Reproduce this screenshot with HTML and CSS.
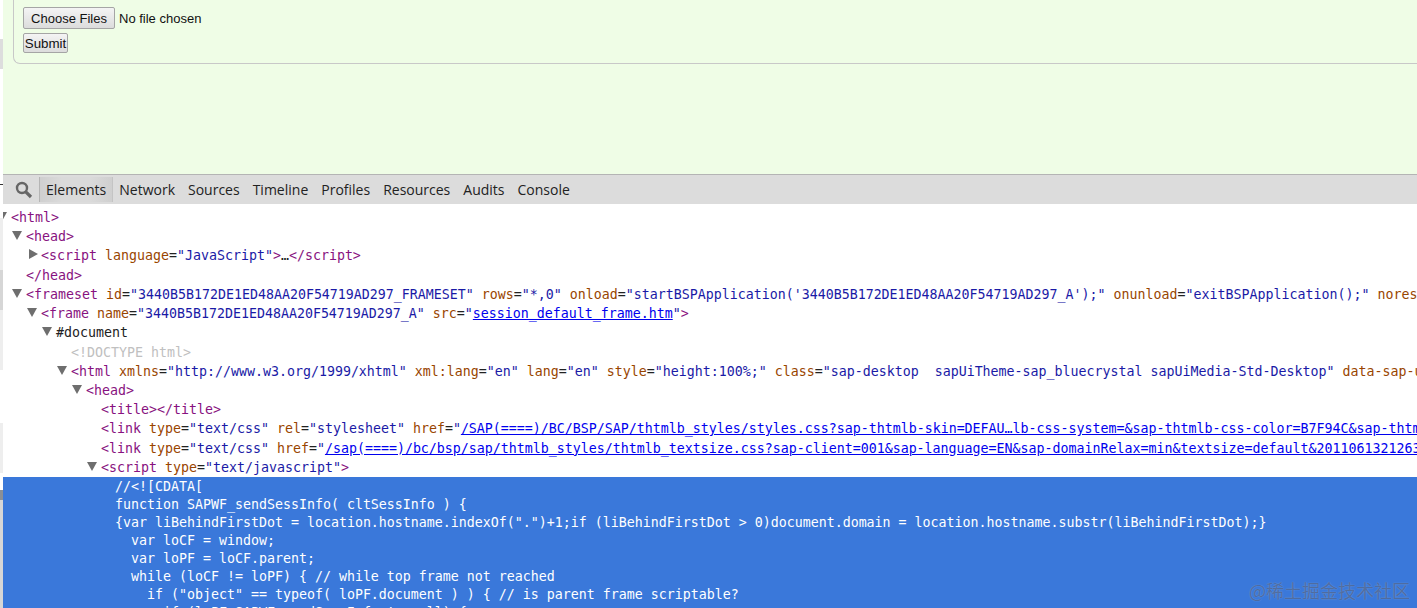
FILE: index.html
```html
<!DOCTYPE html>
<html lang="en">
<head>
    <meta charset="UTF-8">
    <title>Upload</title>
    <link rel="stylesheet" href="styles.css">
</head>
<body>
<div class="strip">
    <div class="s-white s39"></div>
    <div class="s-grey s30"></div>
    <div class="s-white s115"></div>
    <div class="s-line"></div>
    <div class="s-white s33"></div>
    <div class="s-pale s52"></div>
    <div class="s-mid s40"></div>
    <div class="s-pale s60"></div>
    <div class="s-white s53"></div>
    <div class="s-pale s50"></div>
    <div class="s-white s17"></div>
    <div class="s-dark s10"></div>
    <div class="s-mid s108"></div>
</div>
<div class="main">
    <div class="page">
        <div class="box">
            <div class="file-row">
                <button class="file-btn">Choose Files</button>
                <span>No file chosen</span>
            </div>
            <button class="submit-btn">Submit</button>
        </div>
    </div>
    <div class="toolbar">
        <div class="search">
            <svg width="18" height="18" viewBox="0 0 18 18">
                <circle cx="7" cy="7" r="5" fill="none" stroke="#666" stroke-width="2.4"/>
                <path d="M10.8 10.8L16 16" stroke="#666" stroke-width="3.2"/>
            </svg>
        </div>
        <div class="tab active">Elements</div>
        <div class="tab">Network</div>
        <div class="tab">Sources</div>
        <div class="tab">Timeline</div>
        <div class="tab">Profiles</div>
        <div class="tab">Resources</div>
        <div class="tab">Audits</div>
        <div class="tab">Console</div>
    </div>
    <div class="tree">
<div class="row l0"><i class="tw open"></i><span class="t">&lt;html&gt;</span></div>
<div class="row l1"><i class="tw open"></i><span class="t">&lt;head&gt;</span></div>
<div class="row l2"><i class="tw closed"></i><span class="t">&lt;script</span> <span class="a">language</span>=<span class="v">"JavaScript"</span><span class="t">&gt;</span>…<span class="t">&lt;/script&gt;</span></div>
<div class="row l1"><i class="tw"></i><span class="t">&lt;/head&gt;</span></div>
<div class="row l1"><i class="tw open"></i><span class="t">&lt;frameset</span> <span class="a">id</span>=<span class="v">"3440B5B172DE1ED48AA20F54719AD297_FRAMESET"</span> <span class="a">rows</span>=<span class="v">"*,0"</span> <span class="a">onload</span>=<span class="v">"startBSPApplication('3440B5B172DE1ED48AA20F54719AD297_A');"</span> <span class="a">onunload</span>=<span class="v">"exitBSPApplication();"</span> <span class="a">noresize</span>=<span class="v">"noresize"</span><span class="t">&gt;</span></div>
<div class="row l2"><i class="tw open"></i><span class="t">&lt;frame</span> <span class="a">name</span>=<span class="v">"3440B5B172DE1ED48AA20F54719AD297_A"</span> <span class="a">src</span>=<span class="v">"<a class="lnk">session_default_frame.htm</a>"</span><span class="t">&gt;</span></div>
<div class="row l3"><i class="tw open"></i><span class="d">#document</span></div>
<div class="row l4"><i class="tw"></i><span class="dt">&lt;!DOCTYPE html&gt;</span></div>
<div class="row l4"><i class="tw open"></i><span class="t">&lt;html</span> <span class="a">xmlns</span>=<span class="v">"http://www.w3.org/1999/xhtml"</span> <span class="a">xml:lang</span>=<span class="v">"en"</span> <span class="a">lang</span>=<span class="v">"en"</span> <span class="a">style</span>=<span class="v">"height:100%;"</span> <span class="a">class</span>=<span class="v">"sap-desktop  sapUiTheme-sap_bluecrystal sapUiMedia-Std-Desktop"</span> <span class="a">data-sap-ui-theme</span>=<span class="v">"sap"</span><span class="t">&gt;</span></div>
<div class="row l5"><i class="tw open"></i><span class="t">&lt;head&gt;</span></div>
<div class="row l6"><i class="tw"></i><span class="t">&lt;title&gt;&lt;/title&gt;</span></div>
<div class="row l6"><i class="tw"></i><span class="t">&lt;link</span> <span class="a">type</span>=<span class="v">"text/css"</span> <span class="a">rel</span>=<span class="v">"stylesheet"</span> <span class="a">href</span>=<span class="v">"<a class="lnk">/SAP(====)/BC/BSP/SAP/thtmlb_styles/styles.css?sap-thtmlb-skin=DEFAU…lb-css-system=&amp;sap-thtmlb-css-color=B7F94C&amp;sap-thtmlb-css-size=1</a>"</span></div>
<div class="row l6"><i class="tw"></i><span class="t">&lt;link</span> <span class="a">type</span>=<span class="v">"text/css"</span> <span class="a">href</span>=<span class="v">"<a class="lnk">/sap(====)/bc/bsp/sap/thtmlb_styles/thtmlb_textsize.css?sap-client=001&amp;sap-language=EN&amp;sap-domainRelax=min&amp;textsize=default&amp;20110613212631</a>"</span></div>
<div class="row l6"><i class="tw open"></i><span class="t">&lt;script</span> <span class="a">type</span>=<span class="v">"text/javascript"</span><span class="t">&gt;</span></div>
<div class="selected">
<div class="sel-row">//&lt;![CDATA[</div>
<div class="sel-row">function SAPWF_sendSessInfo( cltSessInfo ) {</div>
<div class="sel-row">{var liBehindFirstDot = location.hostname.indexOf(".")+1;if (liBehindFirstDot &gt; 0)document.domain = location.hostname.substr(liBehindFirstDot);}</div>
<div class="sel-row">  var loCF = window;</div>
<div class="sel-row">  var loPF = loCF.parent;</div>
<div class="sel-row">  while (loCF != loPF) { // while top frame not reached</div>
<div class="sel-row">    if ("object" == typeof( loPF.document ) ) { // is parent frame scriptable?</div>
<div class="sel-row">      if (loPF.SAPWF_sendSessInfo != null) {</div>
</div>
    </div>
</div>
<div class="mark">@稀土掘金技术社区</div>
</body>
</html>
```
FILE: styles.css
```css
html, body {
    height: 100%;
}
body {
    display: flex;
    margin: 0;
    overflow: hidden;
    background-color: white;
    font-family: "Liberation Sans", Arial, sans-serif;
}

.strip {
    width: 3px;
    flex: none;
}
.s-white { background-color: #fff; }
.s-grey { background-color: #ddd; }
.s-pale { background-color: #eee; }
.s-mid { background-color: #d6d6d6; }
.s-dark { background-color: #8a8f96; }
.s-line { height: 1px; background-color: #333; }
.s10 { height: 10px; }
.s17 { height: 17px; }
.s30 { height: 30px; }
.s33 { height: 33px; }
.s39 { height: 39px; }
.s40 { height: 40px; }
.s50 { height: 50px; }
.s52 { height: 52px; }
.s53 { height: 53px; }
.s60 { height: 60px; }
.s108 { height: 108px; }
.s115 { height: 115px; }

.main {
    flex: 1;
    min-width: 0;
}

.page {
    height: 174px;
    padding-left: 10px;
    overflow: hidden;
    background-color: #effde6;
    box-sizing: border-box;
}
.box {
    display: flex;
    flex-direction: column;
    align-items: flex-start;
    gap: 4px;
    height: 74px;
    margin-top: -10px;
    padding: 16px 0 0 9px;
    border: 1px solid #c8c8c8;
    border-right: 0;
    border-radius: 0 0 0 7px;
    box-sizing: border-box;
    font-size: 13px;
    color: #111;
}
.file-row {
    display: flex;
    align-items: center;
    gap: 4px;
}
.file-btn, .submit-btn {
    margin: 0;
    padding: 0;
    border: 1px solid #a5a5a5;
    border-radius: 2px;
    background: linear-gradient(#f4f4f4, #dcdcdc);
    font-family: "Liberation Sans", Arial, sans-serif;
    font-size: 13px;
    color: #111;
}
.file-btn {
    width: 92px;
    height: 22px;
}
.submit-btn {
    width: 45px;
    height: 20px;
    font-size: 13.33px;
}

.toolbar {
    display: flex;
    align-items: center;
    gap: 13px;
    height: 30px;
    border-top: 1px solid #b4b4b4;
    background-color: #dcdcdc;
    box-sizing: border-box;
    font-family: "Open Sans", sans-serif;
    font-size: 14px;
    color: #222;
}
.search {
    display: flex;
    align-items: center;
    width: 24px;
    height: 100%;
    margin-right: -13px;
    padding-left: 12px;
}
.tab.active {
    align-self: center;
    margin-right: -7px;
    padding: 3px 6px 3px 6px;
    border-left: 1px solid #b5b5b5;
    border-right: 1px solid #c4c4c4;
    background: linear-gradient(90deg, #cfcfcf, #dadada 30%, #dadada 70%, #cfcfcf);
}

.tree {
    height: 404px;
    padding-top: 4px;
    overflow: hidden;
    box-sizing: border-box;
    font-family: "DejaVu Sans Mono", monospace;
    font-size: 13.29px;
    color: #222;
}
.row {
    height: 19.23px;
    line-height: 19.23px;
    white-space: pre;
}
.l0 { padding-left: 0; }
.l1 { padding-left: 15px; }
.l2 { padding-left: 30px; }
.l3 { padding-left: 45px; }
.l4 { padding-left: 60px; }
.l5 { padding-left: 75px; }
.l6 { padding-left: 90px; }

.tw {
    display: inline-block;
    position: relative;
    width: 15px;
    height: 10px;
    margin-left: -7px;
}
.tw.open::before, .tw.closed::before {
    content: "";
    position: absolute;
    width: 0;
    height: 0;
}
.tw.open::before {
    top: 0;
    left: 1px;
    border-top: 9px solid #6e6e6e;
    border-left: 5px solid transparent;
    border-right: 5px solid transparent;
}
.tw.closed::before {
    top: -1px;
    left: 3px;
    border-left: 9px solid #6e6e6e;
    border-top: 5px solid transparent;
    border-bottom: 5px solid transparent;
}

.t { color: #881280; }
.a { color: #994500; }
.v { color: #1a1aa6; }
.d { color: #222; }
.dt { color: #c0c0c0; }
.lnk {
    color: #00e;
    text-decoration: underline;
}

.selected {
    padding: 1px 0 0 112px;
    background-color: #3a78da;
    color: white;
}
.sel-row {
    height: 18px;
    line-height: 18px;
    white-space: pre;
}

.mark {
    position: absolute;
    right: 7px;
    bottom: 7px;
    font-family: "Noto Sans CJK SC", sans-serif;
    font-size: 18px;
    line-height: 22px;
    color: rgba(40, 60, 100, 0.55);
    text-shadow: 0 0 1px rgba(255, 255, 255, 0.4);
}
```
